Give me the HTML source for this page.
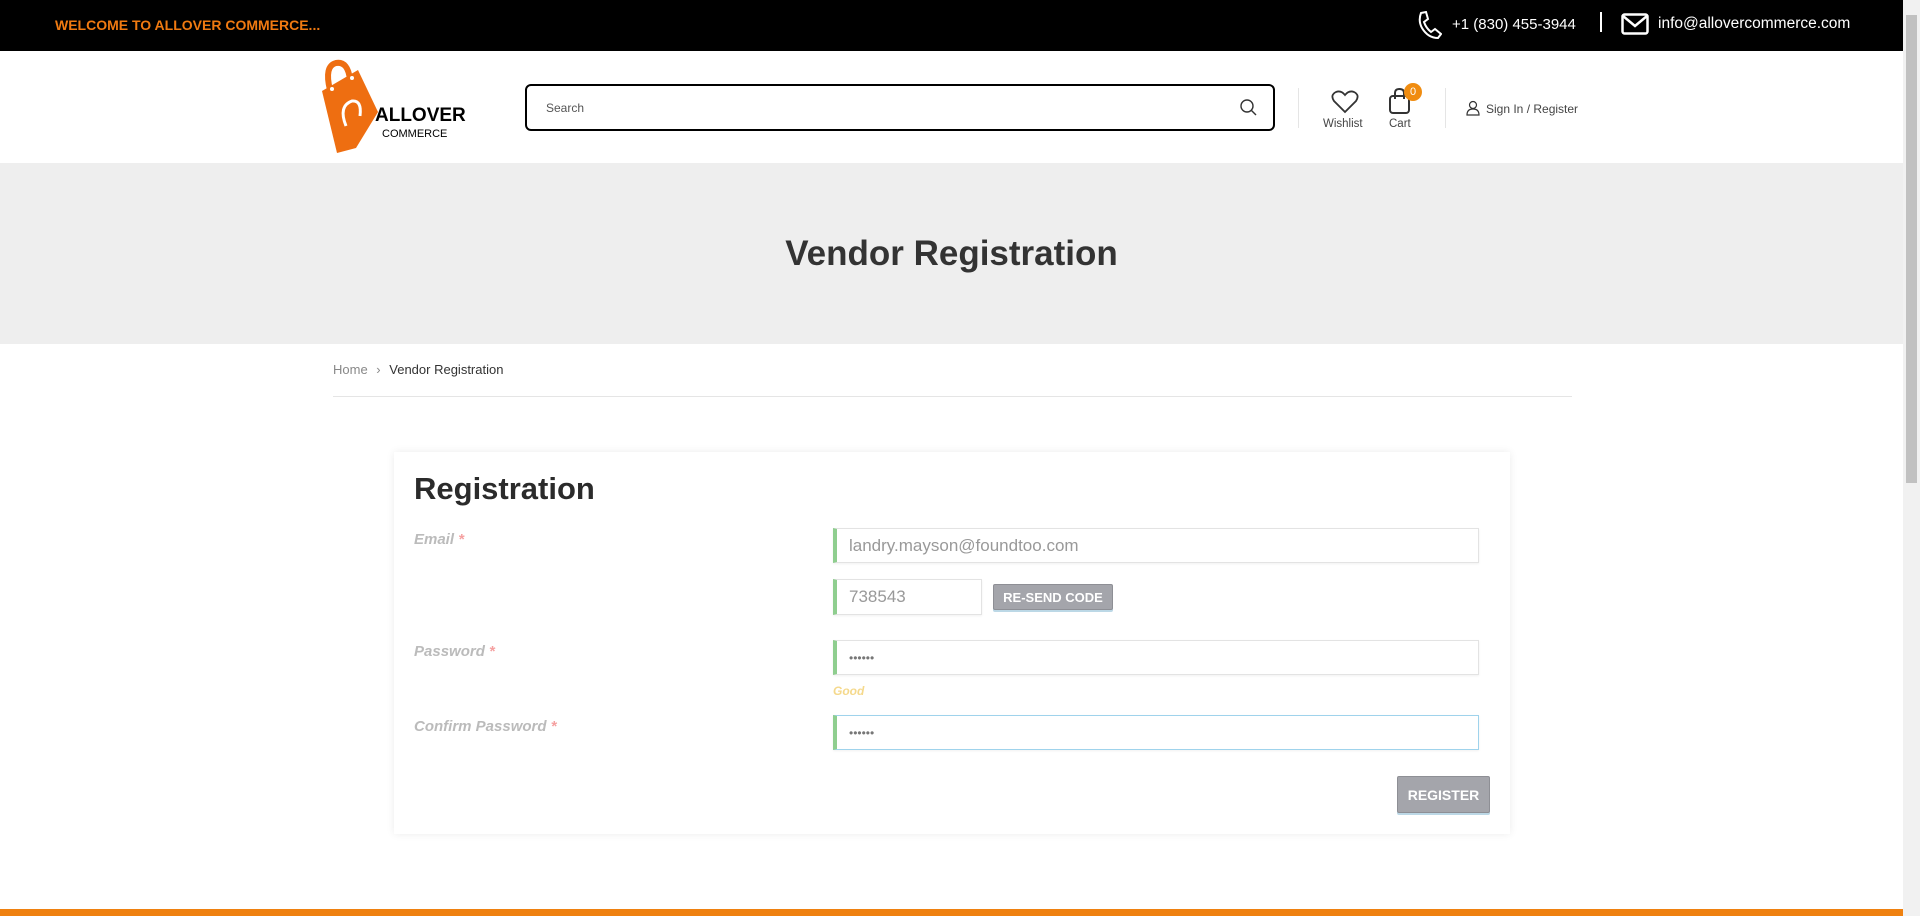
<!DOCTYPE html>
<html><head><meta charset="utf-8"><style>
*{box-sizing:border-box;margin:0;padding:0}
body{width:1920px;height:916px;overflow:hidden;font-family:"Liberation Sans",sans-serif;background:#fff;position:relative;color:#333}
.abs{position:absolute}
.top{left:0;top:0;width:1903px;height:51px;background:#000}
.scroll{left:1903px;top:0;width:17px;height:916px;background:#f1f1f1}
.thumb{left:1906px;top:15px;width:11px;height:468px;background:#c1c1c1}
.inp{background:#fff;border:1px solid #e3e3e3;border-left:4px solid #8fce8f;box-shadow:0 1px 2px rgba(0,0,0,.06);color:#999;font-size:17px;padding-left:12px;display:flex;align-items:center}
.lbl{font-style:italic;font-weight:bold;color:#bbb;font-size:15px}
.lbl span{color:#f5a0a0}
.btn{background:#a4a5ab;color:#fff;font-weight:bold;border:1px solid #8e8f95;border-radius:2px;display:flex;align-items:center;justify-content:center;box-shadow:0 2px 0 #bcd8e6}
</style></head><body>
<div class="abs top"></div>
<div class="abs" style="left:55px;top:17px;color:#f07a11;font-size:14px;font-weight:bold">WELCOME TO ALLOVER COMMERCE...</div>
<svg class="abs" style="left:1416px;top:11px" width="26" height="28" viewBox="0 0 26 28"><path d="M5 2 L10 1 L12 8 L8 11 Q10 17 15 21 L19 18 L25 23 L22 27 Q12 27 6 17 Q2 10 5 2Z" fill="none" stroke="#fff" stroke-width="2"/></svg>
<div class="abs" style="left:1452px;top:16px;color:#fff;font-size:15px">+1 (830) 455-3944</div>
<div class="abs" style="left:1600px;top:12px;width:2px;height:20px;background:#fff"></div>
<svg class="abs" style="left:1621px;top:13px" width="28" height="22" viewBox="0 0 28 22"><rect x="1.5" y="1.5" width="25" height="19" rx="2" fill="none" stroke="#fff" stroke-width="2.5"/><path d="M2 3 L14 13 L26 3" fill="none" stroke="#fff" stroke-width="2.5"/></svg>
<div class="abs" style="left:1658px;top:15px;color:#fff;font-size:15.5px">info@allovercommerce.com</div>

<svg class="abs" style="left:320px;top:56px" width="80" height="100" viewBox="0 0 80 100"><path d="M10 34 Q4 10 16 7 Q28 5 30 24" fill="none" stroke="#ee6e11" stroke-width="6"/><path d="M2 35 L38 14 L58 56 L36 92 L17 97 Z" fill="#ee6e11"/><path d="M26 70 Q18 50 32 45 Q42 44 40 60" fill="none" stroke="#fff" stroke-width="3"/><circle cx="12" cy="33" r="2" fill="#fff"/><circle cx="32" cy="22" r="2" fill="#fff"/></svg>
<div class="abs" style="left:375px;top:105px;font-size:19px;font-weight:bold;color:#000">ALLOVER</div>
<div class="abs" style="left:382px;top:128px;font-size:11px;color:#000">COMMERCE</div>

<div class="abs" style="left:525px;top:84px;width:750px;height:47px;border:2px solid #000;border-radius:6px"></div>
<div class="abs" style="left:546px;top:101px;font-size:12px;color:#555">Search</div>
<svg class="abs" style="left:1239px;top:98px" width="18" height="18" viewBox="0 0 18 18"><circle cx="8" cy="8" r="6" fill="none" stroke="#333" stroke-width="1.4"/><path d="M12.5 12.5L17 17" stroke="#333" stroke-width="1.4"/></svg>
<div class="abs" style="left:1298px;top:88px;width:1px;height:40px;background:#e5e5e5"></div>
<svg class="abs" style="left:1331px;top:90px" width="28" height="24" viewBox="0 0 28 24"><path d="M14 22 L3 11 Q-1 5 5 2 Q10 0 14 5 Q18 0 23 2 Q29 5 25 11Z" fill="none" stroke="#333" stroke-width="1.8"/></svg>
<div class="abs" style="left:1323px;top:118px;font-size:11.5px;color:#444">Wishlist</div>
<svg class="abs" style="left:1388px;top:87px" width="24" height="28" viewBox="0 0 24 28"><rect x="2" y="9" width="19" height="17" rx="3" fill="none" stroke="#333" stroke-width="2"/><path d="M7 12V6Q7 2 11.5 2Q16 2 16 6V12" fill="none" stroke="#333" stroke-width="2"/></svg>
<div class="abs" style="left:1404px;top:83px;width:18px;height:18px;border-radius:50%;background:#f08c10;color:#fff;font-size:11px;text-align:center;line-height:18px">0</div>
<div class="abs" style="left:1389px;top:118px;font-size:11.5px;color:#444">Cart</div>
<div class="abs" style="left:1445px;top:88px;width:1px;height:40px;background:#e5e5e5"></div>
<svg class="abs" style="left:1466px;top:100px" width="14" height="16" viewBox="0 0 14 16"><circle cx="7" cy="5" r="3.5" fill="none" stroke="#333" stroke-width="1.2"/><path d="M1 15 Q1 9 7 9 Q13 9 13 15Z" fill="none" stroke="#333" stroke-width="1.2"/></svg>
<div class="abs" style="left:1486px;top:102px;font-size:12px;color:#444">Sign In / Register</div>

<div class="abs" style="left:0;top:163px;width:1903px;height:181px;background:#eee"></div>
<div class="abs" style="left:0;top:234px;width:1903px;text-align:center;font-size:35px;font-weight:bold;color:#333">Vendor Registration</div>
<div class="abs" style="left:333px;top:362px;font-size:13px;color:#888">Home <span style="margin:0 5px">›</span> <span style="color:#333">Vendor Registration</span></div>
<div class="abs" style="left:333px;top:396px;width:1239px;height:1px;background:#e5e5e5"></div>

<div class="abs" style="left:394px;top:452px;width:1116px;height:382px;background:#fff;box-shadow:0 0 8px rgba(0,0,0,.08)"></div>
<div class="abs" style="left:414px;top:471px;font-size:31px;font-weight:bold;color:#2b2b2b">Registration</div>
<div class="abs lbl" style="left:414px;top:531px">Email <span>*</span></div>
<div class="abs inp" style="left:833px;top:528px;width:646px;height:35px">landry.mayson@foundtoo.com</div>
<div class="abs inp" style="left:833px;top:579px;width:149px;height:36px">738543</div>
<div class="abs btn" style="left:993px;top:584px;width:120px;height:26px;font-size:13px">RE-SEND CODE</div>
<div class="abs lbl" style="left:414px;top:643px">Password <span>*</span></div>
<div class="abs inp" style="left:833px;top:640px;width:646px;height:35px;color:#777;font-size:12px">••••••</div>
<div class="abs" style="left:833px;top:684px;font-size:12px;font-style:italic;font-weight:bold;color:#f5d98c">Good</div>
<div class="abs lbl" style="left:414px;top:718px">Confirm Password <span>*</span></div>
<div class="abs inp" style="left:833px;top:715px;width:646px;height:35px;border-color:#9fd3ec;border-left-color:#8fce8f;color:#777;font-size:12px">••••••</div>
<div class="abs btn" style="left:1397px;top:776px;width:93px;height:37px;font-size:14px">REGISTER</div>

<div class="abs" style="left:0;top:909px;width:1903px;height:7px;background:#ef8110"></div>
<div class="abs scroll"></div><div class="abs thumb"></div>
</body></html>
